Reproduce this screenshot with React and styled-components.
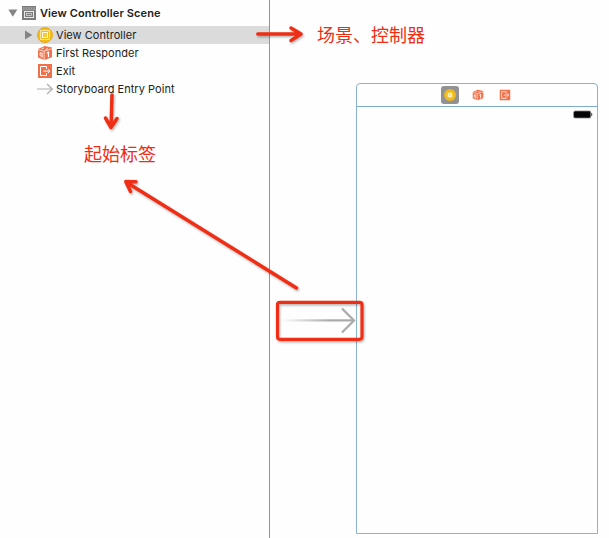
import React from "react";
import styled, { createGlobalStyle } from "styled-components";

const GlobalStyle = createGlobalStyle`
  * { box-sizing: border-box; }
  body { margin: 0; background: #fefefe; }
`;

const Workspace = styled.main`
  position: relative;
  display: flex;
  width: 609px;
  height: 538px;
  overflow: hidden;
  background: #fefefe;
  color: #222;
  font-family: Inter, "Noto Sans CJK SC", sans-serif;
`;

const Outline = styled.nav`
  flex: none;
  width: 270px;
  border-right: 1px solid #939393;
`;

const SceneHeader = styled.div`
  display: flex;
  align-items: center;
  height: 26px;
  padding: 0 0 0 7px;
`;

const Row = styled.div`
  display: flex;
  align-items: center;
  height: 18px;
  padding-left: 23px;
  background: ${(p) => (p.$selected ? "#dbdbdb" : "transparent")};
`;

const Disclosure = styled.span`
  display: flex;
  flex: none;
  align-items: center;
  width: 14px;
  padding-left: 1px;
`;

const IconSlot = styled.span`
  display: flex;
  flex: none;
  width: 16px;
  height: 16px;
  margin-right: 3px;
`;

const Label = styled.span`
  font-size: 11px;
  line-height: 16px;
  font-weight: ${(p) => (p.$bold ? 600 : 400)};
  letter-spacing: ${(p) => (p.$bold ? 0.12 : 0.04)}px;
  white-space: nowrap;
`;

const Canvas = styled.section`
  flex: 1;
  padding: 83px 0 0 86px;
`;

const Device = styled.div`
  display: flex;
  flex-direction: column;
  width: 242px;
  height: 451px;
  border: 1px solid #8ab2d2;
  border-radius: 4px 4px 0 0;
`;

const Dock = styled.div`
  display: flex;
  align-items: center;
  height: 23px;
  padding-left: 84px;
  gap: 9.5px;
  border-bottom: 1px solid #7eabcf;
`;

const DockItem = styled.span`
  display: flex;
  align-items: center;
  justify-content: center;
  width: 18px;
  height: 18px;
  border-radius: 3px;
  background: ${(p) => (p.$selected ? "#929294" : "transparent")};
`;

const StatusBar = styled.div`
  display: flex;
  justify-content: flex-end;
  padding: 3px 4px 0 0;
`;

const Annotations = styled.svg`
  position: absolute;
  inset: 0;
  pointer-events: none;
`;

const Note = styled.span`
  position: absolute;
  left: ${(p) => p.$x}px;
  top: ${(p) => p.$y}px;
  color: #ee2d12;
  font: 400 18px/24px "Noto Sans CJK SC", sans-serif;
  white-space: nowrap;
`;

const SceneIcon = () => (
  <svg width="16" height="16" viewBox="0 0 16 16">
    <rect x="1" y="1" width="14" height="14" fill="#7b7b7b" />
    <path d="M2 3h12" stroke="#c9c9c9" strokeWidth="1" strokeDasharray="1.6 1" />
    <path d="M1 4.8h14" stroke="#b5b5b5" strokeWidth=".6" />
    <rect x="3.5" y="6.5" width="9" height="6" fill="none" stroke="#e8e8e8" />
    <rect x="5.5" y="8.5" width="5" height="2" fill="none" stroke="#e0e0e0" strokeWidth=".7" />
  </svg>
);

const ControllerIcon = () => (
  <svg width="16" height="16" viewBox="0 0 16 16">
    <circle cx="8" cy="8" r="7.4" fill="#f5be18" stroke="#e5a50c" strokeWidth="1" />
    <rect x="3.5" y="3.5" width="9" height="9" fill="none" stroke="#fbe49a" strokeWidth="1" />
    <rect x="5.5" y="5.5" width="5" height="5" fill="#f7c93b" stroke="#fff6d8" strokeWidth="1" />
  </svg>
);

const DockControllerIcon = () => (
  <svg width="14" height="14" viewBox="0 0 14 14">
    <circle cx="7" cy="7" r="6" fill="#edb820" />
    <circle cx="7" cy="7" r="3.5" fill="#f8cb39" />
    <rect x="5" y="5" width="4" height="4" rx="1" fill="#fff4cf" />
    <rect x="6.4" y="6.4" width="1.2" height="1.2" fill="#e9bd43" />
  </svg>
);

const ResponderIcon = ({ size = 16 }) => (
  <svg width={size} height={size} viewBox="0 0 16 16">
    <path d="M1 4 7.5 1 15 2.6v9.6L7.5 15 1 12.4Z" fill="#f0714a" />
    <path d="m1 4.6 6 1.6 8-2.4M7.1 6.2V15" fill="none" stroke="#fff" strokeWidth=".7" />
    <path d="m4.6 3.8 2.2-.9M8.6 4.4l2.4-.8" fill="none" stroke="#fff" strokeWidth=".8" />
    <path d="M5.1 8.4 3 7.8v2.8l2.1.7M5.1 7.6v5" fill="none" stroke="#fff" strokeWidth=".9" />
    <path d="m9.8 8.3 1.7-1v5" fill="none" stroke="#fff" strokeWidth="1.2" />
  </svg>
);

const ExitIcon = ({ size = 16 }) => (
  <svg width={size} height={size} viewBox="0 0 16 16">
    <rect x="1" y="1" width="14" height="14" fill="#f0714a" />
    <path d="M9.5 6V3.5h-6v9h6V10M6.5 8.1h6" fill="none" stroke="#fff" strokeWidth="1" />
    <path d="m11 6.2 2 1.9-2 1.9" fill="none" stroke="#fff" strokeWidth="1" />
  </svg>
);

const EntryIcon = () => (
  <svg width="16" height="16" viewBox="0 0 16 16">
    <path d="M0 8h15M10 3l5.3 5-5.3 5" fill="none" stroke="#b0b0b0" strokeWidth="1.2" />
  </svg>
);

const BatteryIcon = () => (
  <svg width="20" height="9" viewBox="0 0 20 9">
    <rect x=".6" y=".9" width="17.2" height="7.2" rx="1.5" fill="#050505" stroke="#999" strokeWidth=".8" />
    <rect x="18.1" y="3" width="1.1" height="3" rx=".5" fill="#555" />
  </svg>
);

const items = [
  { label: "View Controller", icon: <ControllerIcon />, selected: true },
  { label: "First Responder", icon: <ResponderIcon /> },
  { label: "Exit", icon: <ExitIcon /> },
  { label: "Storyboard Entry Point", icon: <EntryIcon /> },
];

export default function App() {
  return (
    <>
      <GlobalStyle />
      <Workspace>
        <Outline>
          <SceneHeader>
            <Disclosure>
              <svg width="10" height="8"><path d="M.3.5h9L4.8 7.7Z" fill="#858585" /></svg>
            </Disclosure>
            <IconSlot><SceneIcon /></IconSlot>
            <Label $bold>View Controller Scene</Label>
          </SceneHeader>
          {items.map(({ label, icon, selected }) => (
            <Row key={label} $selected={selected}>
              <Disclosure>
                {selected && <svg width="9" height="10"><path d="M1 .6v8.8L8.3 5Z" fill="#858585" /></svg>}
              </Disclosure>
              <IconSlot>{icon}</IconSlot>
              <Label>{label}</Label>
            </Row>
          ))}
        </Outline>
        <Canvas>
          <Device>
            <Dock>
              <DockItem $selected><DockControllerIcon /></DockItem>
              <DockItem><ResponderIcon size={12} /></DockItem>
              <DockItem><ExitIcon size={12} /></DockItem>
            </Dock>
            <StatusBar><BatteryIcon /></StatusBar>
          </Device>
        </Canvas>

        <Annotations width="609" height="538" viewBox="0 0 609 538">
          <defs>
            <linearGradient id="entry-fade" gradientUnits="userSpaceOnUse" x1="281" y1="0" x2="330" y2="0">
              <stop offset="0" stopColor="#aaa" stopOpacity="0" />
              <stop offset="1" stopColor="#aaa" />
            </linearGradient>
            <filter id="soft-shadow" filterUnits="userSpaceOnUse" x="0" y="0" width="609" height="538">
              <feDropShadow dx="1" dy="1.5" stdDeviation="1.2" floodColor="#000" floodOpacity=".3" />
            </filter>
          </defs>
          <rect x="281" y="319.3" width="73" height="2.2" fill="url(#entry-fade)" />
          <path d="m342 308.5 12 12-12 12" fill="none" stroke="#aaa" strokeWidth="2.2" />
          <g filter="url(#soft-shadow)" fill="none" stroke="#ee2d12" strokeWidth="3.5" strokeLinecap="round" strokeLinejoin="round">
            <path d="M257.8 34H300M291 28l10 6-10 6.5" />
            <path d="M112 95l-.9 32M105.5 118l5.5 9.5 6-9" />
            <path d="M296.5 288 126 182M136 181.8 125.8 181.5l4.7 10" />
            <rect x="277.5" y="302.3" width="84.5" height="37" rx="2.5" strokeWidth="3.2" />
          </g>
        </Annotations>
        <Note $x={317} $y={22}>场景、控制器</Note>
        <Note $x={84} $y={141}>起始标签</Note>
      </Workspace>
    </>
  );
}
